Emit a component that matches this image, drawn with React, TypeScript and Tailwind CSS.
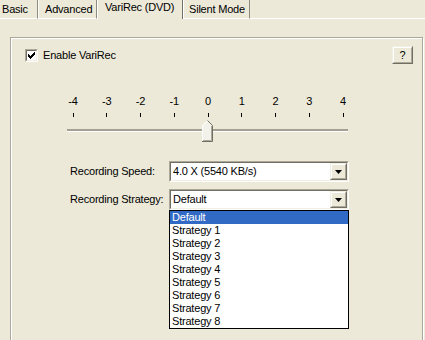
import React from 'react';

const ticks = ['-4', '-3', '-2', '-1', '0', '1', '2', '3', '4'];
const strategies = [
  'Default',
  'Strategy 1',
  'Strategy 2',
  'Strategy 3',
  'Strategy 4',
  'Strategy 5',
  'Strategy 6',
  'Strategy 7',
  'Strategy 8',
];

const Raised: React.FC<{ className?: string; children?: React.ReactNode }> = ({ className = '', children }) => (
  <div className={`border border-t-[#F1EFE2] border-l-[#F1EFE2] border-r-[#716F64] border-b-[#716F64] ${className}`}>
    <div className="w-full h-full flex items-center justify-center bg-[#ECE9D8] border border-t-white border-l-white border-r-[#ACA899] border-b-[#ACA899]">
      {children}
    </div>
  </div>
);

const ComboBox: React.FC<{ value: string; children?: React.ReactNode }> = ({ value, children }) => (
  <div className="relative w-[180px] h-[21px] border border-t-[#ACA899] border-l-[#ACA899] border-r-white border-b-white">
    <div className="h-full flex bg-white border border-t-[#716F64] border-l-[#716F64] border-r-[#F1EFE2] border-b-[#F1EFE2]">
      <span className="flex-1 pl-[2px] leading-[17px] whitespace-nowrap">{value}</span>
      <Raised className="w-[17px] h-[17px]">
        <svg width="7" height="4" viewBox="0 0 7 4">
          <path d="M0 0H7L3.5 4Z" fill="#000" />
        </svg>
      </Raised>
    </div>
    {children}
  </div>
);

const Thumb = () => (
  <svg width="11" height="22" viewBox="0 0 11 22" className="absolute left-[135px] top-[25px]">
    <path d="M0.5 5.5L5.5 0.5L10.5 5.5V21.5H0.5Z" fill="#F2F1EA" />
    <polyline points="0.5,21 0.5,5.5 5.5,0.5" fill="none" stroke="#fff" />
    <polyline points="5.5,0.5 10.5,5.5 10.5,21.5 0,21.5" fill="none" stroke="#716F64" />
    <polyline points="9.5,6 9.5,20.5 1,20.5" fill="none" stroke="#ACA899" />
  </svg>
);

export default function App() {
  return (
    <div className="w-[425px] h-[340px] overflow-hidden bg-[#ECE9D8] text-black font-['Liberation_Sans',Arial,sans-serif] text-[11px] leading-[13px] tracking-[-0.2px]">
      {/* tab strip */}
      <div className="flex items-end h-[19px]">
        <div className="w-[38px] h-[19px] pt-[3px] pl-[2px] border-r border-r-[#8E8C80] border-b border-b-white">Basic</div>
        <div className="w-[59px] h-[19px] pt-[3px] pl-[6px] border-l border-l-white border-r border-r-[#8E8C80] border-b border-b-white">Advanced</div>
        <div className="w-[86px] h-[19px] pt-[1px] pl-[7px] border-l border-l-white border-r border-r-[#716F64]">VariRec (DVD)</div>
        <div className="w-[67px] h-[19px] pt-[3px] pl-[5px] border-l border-l-white border-r border-r-[#8E8C80] border-b border-b-white">Silent Mode</div>
        <div className="flex-1 h-[19px] border-b border-b-white" />
      </div>

      {/* page */}
      <div className="pt-[18px] pl-[10px]">
        <div className="w-[413px] h-[320px] border border-[#ACA899] shadow-[inset_1px_1px_0_#fff,1px_1px_0_#fff]">
          <div className="flex justify-between items-start pt-[8px] pl-[14px] pr-[9px]">
            <label className="flex items-center gap-[5px] mt-[3px]">
              <div className="w-[13px] h-[13px] border border-t-[#ACA899] border-l-[#ACA899] border-r-white border-b-white">
                <div className="w-full h-full bg-white border border-t-[#716F64] border-l-[#716F64] border-r-[#F1EFE2] border-b-[#F1EFE2] flex items-center justify-center">
                  <svg width="7" height="7" viewBox="0 0 7 7" shapeRendering="crispEdges">
                    <path d="M6 0h1v3h-1v1h-1v1h-1v1h-1v1h-1v-1h-1v-1h-1v-3h1v1h1v1h1v-1h1v-1h1z" fill="#000" />
                  </svg>
                </div>
              </div>
              <span>Enable VariRec</span>
            </label>
            <Raised className="w-[21px] h-[18px]">
              <span className="leading-[13px]">?</span>
            </Raised>
          </div>

          {/* slider */}
          <div className="relative mt-[31px] ml-[56px] w-[282px]">
            <div className="flex justify-between">
              {ticks.map((t) => (
                <div key={t} className="w-[12px] flex flex-col items-center">
                  <span className="whitespace-nowrap">{t}</span>
                  <div className="w-[1px] h-[4px] bg-black mt-[5px]" />
                </div>
              ))}
            </div>
            <div className="mt-[12px] w-[281px]">
              <div className="h-[2px] bg-[#A3A194]" />
              <div className="h-[1px] bg-white" />
            </div>
            <Thumb />
          </div>

          {/* combos */}
          <div className="mt-[29px] ml-[59px] flex flex-col gap-[7px]">
            <div className="flex items-center">
              <span className="w-[99px]">Recording Speed:</span>
              <ComboBox value="4.0 X (5540 KB/s)" />
            </div>
            <div className="flex items-center">
              <span className="w-[99px] whitespace-nowrap">Recording Strategy:</span>
              <ComboBox value="Default">
                <div className="absolute left-[-1px] top-[20px] w-[180px] border border-black bg-white z-10">
                  {strategies.map((s, i) => (
                    <div
                      key={s}
                      className={`h-[13px] pl-[2px] leading-[13px] ${i === 0 ? 'bg-[#316AC5] text-white' : ''}`}
                    >
                      {s}
                    </div>
                  ))}
                </div>
              </ComboBox>
            </div>
          </div>
        </div>
      </div>
    </div>
  );
}
